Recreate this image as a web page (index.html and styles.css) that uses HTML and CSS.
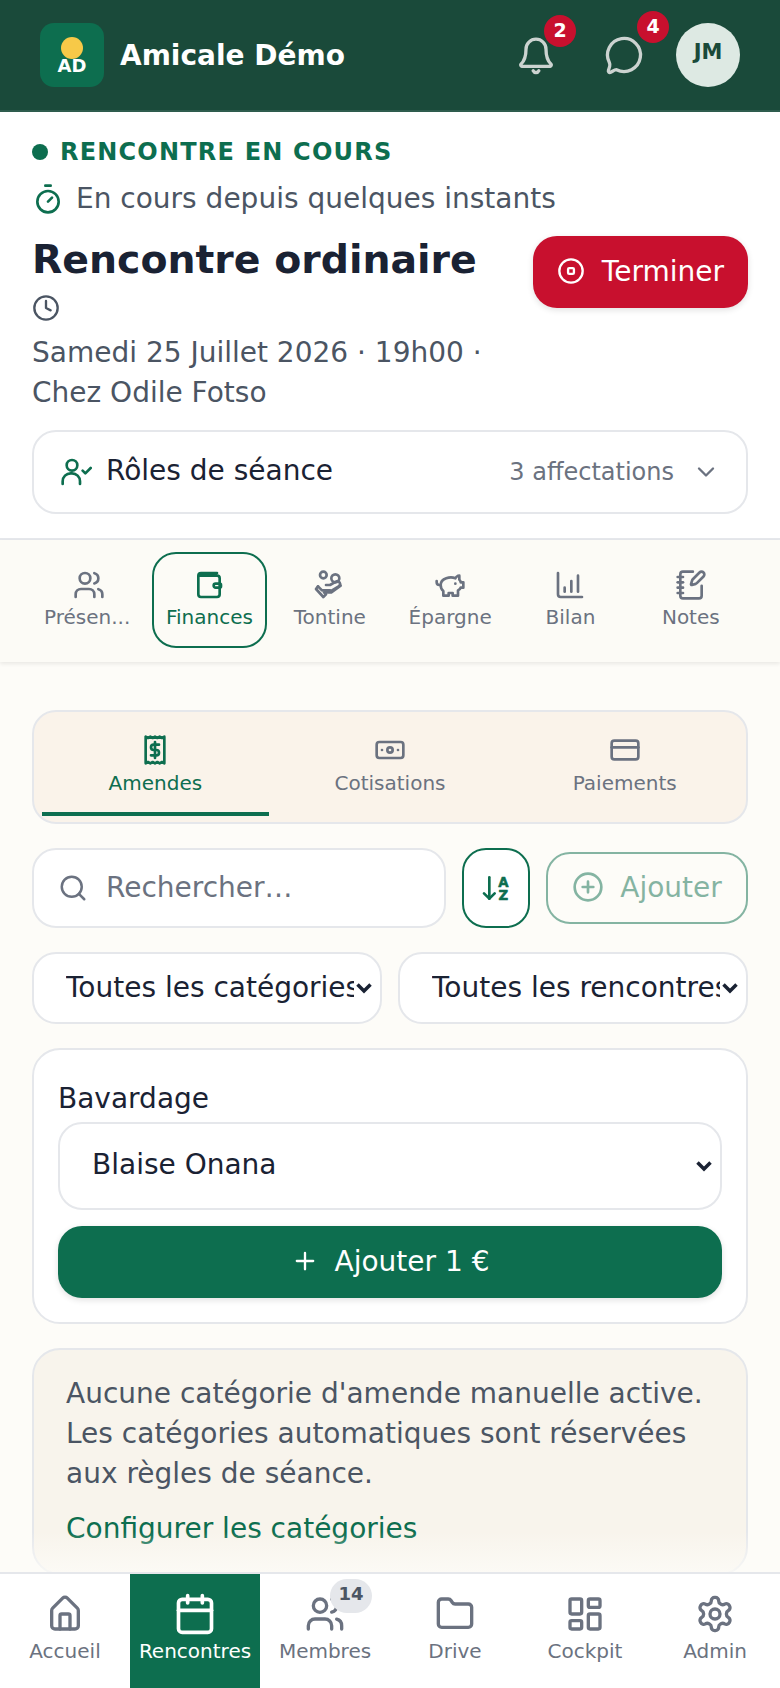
FILE: index.html
```html
<!DOCTYPE html>
<html lang="fr">
<head>
	<title>Rencontre ordinaire</title>
	<meta charset="utf-8">
	<link rel="stylesheet" href="styles.css">
</head>
<body>
	<header class="topbar">
		<div class="brand">
			<div class="logo"><span class="logo-sun"></span><span class="logo-text">AD</span></div>
			<span class="brand-name">Amicale Démo</span>
		</div>
		<div class="top-actions">
			<div class="top-icon top-bell">
				<svg viewBox="0 0 24 24"><path d="M6 8.500a6 6 0 0 1 12 0c0 5.500 1.500 7.500 3 9a.8.8 0 0 1-.5 1.300H3.500a.8.8 0 0 1-.5-1.300c1.500-1.500 3-3.500 3-9z"/><path d="M10.300 21.500a1.900 1.900 0 0 0 3.400 0"/></svg>
				<span class="badge">2</span>
			</div>
			<div class="top-icon top-chat">
				<svg viewBox="0 0 24 24"><path d="M7.900 20A9 9 0 1 0 4 16.100c.3.700.4 1.400.2 2.100L3.500 20.500a.8.8 0 0 0 1 1c1.200-.5 2.200-1.500 3.400-1.500z"/></svg>
				<span class="badge">4</span>
			</div>
			<div class="avatar">JM</div>
		</div>
	</header>

	<main class="page">
		<section class="meeting">
			<div class="live"><span class="live-dot"></span>RENCONTRE EN COURS</div>
			<div class="since">
				<svg class="since-icon" viewBox="0 0 24 24"><path d="M10 2h4"/><path d="M12 14l3-3"/><circle cx="12" cy="14" r="8"/></svg>
				<span>En cours depuis quelques instants</span>
			</div>
			<div class="meeting-head">
				<div class="meeting-info">
					<h1>Rencontre ordinaire</h1>
					<svg class="clock" viewBox="0 0 24 24"><circle cx="12" cy="12" r="10"/><path d="M12 6v6l4 2"/></svg>
					<p>Samedi 25 Juillet 2026 · 19h00 ·<br>Chez Odile Fotso</p>
				</div>
				<button class="end-btn">
					<svg viewBox="0 0 24 24"><circle cx="12" cy="12" r="10"/><rect x="9.500" y="9.500" width="5" height="5" rx="1"/></svg>
					Terminer
				</button>
			</div>
			<div class="roles">
				<svg class="roles-icon" viewBox="0 0 24 24"><path d="M2 21v-2a6 6 0 0 1 6-6h1a6 6 0 0 1 6 6v2"/><circle cx="9" cy="7" r="4"/><path d="M17 11l2 2 4-4"/></svg>
				<span class="roles-name">Rôles de séance</span>
				<span class="roles-count">3 affectations</span>
				<svg class="roles-chevron" viewBox="0 0 24 24"><path d="M6 9l6 6 6-6"/></svg>
			</div>
		</section>

		<nav class="sections">
			<div class="section-tab first">
				<svg viewBox="0 0 24 24"><path d="M16 21v-2a4 4 0 0 0-4-4H6a4 4 0 0 0-4 4v2"/><circle cx="9" cy="7" r="4"/><path d="M22 21v-2a4 4 0 0 0-3-3.870"/><path d="M16 3.130a4 4 0 0 1 0 7.750"/></svg>
				<span>Présen...</span>
			</div>
			<div class="section-tab active">
				<svg viewBox="0 0 24 24"><path d="M18 3H6a2 2 0 0 0-2 2v14a2 2 0 0 0 2 2h12a2 2 0 0 0 2-2V7a2 2 0 0 0-2-2H5"/><path d="M20 11h-3a1.500 1.500 0 0 0 0 3h3a1 1 0 0 0 1-1v-1a1 1 0 0 0-1-1z"/></svg>
				<span>Finances</span>
			</div>
			<div class="section-tab">
				<svg viewBox="0 0 24 24"><circle cx="7" cy="4.500" r="2.500"/><path d="M3 13l3 3h6"/><path d="M9 12h3l4.500-2.500a2 2 0 0 1 2 3.500L12 17"/><circle cx="16" cy="7" r="3"/><path d="M3 13l-1.500 2 5.500 6 2-2-1.500-1.500H13l7-5"/></svg>
				<span>Tontine</span>
			</div>
			<div class="section-tab">
				<svg viewBox="0 0 24 24"><path d="M19 5c-1.500 0-2.800 1.400-3 2-3.500-1.500-11-.3-11 5 0 1.800 0 3 2 4.500V20h4v-2h3v2h4v-4c1-.5 1.700-1 2-2h2v-4h-2c0-1-.5-1.500-1-2V5z"/><path d="M2 9v1c0 1.100.9 2 2 2h1"/><path d="M16 11h.01"/></svg>
				<span>Épargne</span>
			</div>
			<div class="section-tab">
				<svg viewBox="0 0 24 24"><path d="M3 3v16a2 2 0 0 0 2 2h16"/><path d="M8 17v-3"/><path d="M13 17V9"/><path d="M18 17V5"/></svg>
				<span>Bilan</span>
			</div>
			<div class="section-tab">
				<svg viewBox="0 0 24 24"><path d="M13.400 2H6a2 2 0 0 0-2 2v16a2 2 0 0 0 2 2h12a2 2 0 0 0 2-2v-7.400"/><path d="M2 6h4"/><path d="M2 10h4"/><path d="M2 14h4"/><path d="M2 18h4"/><path d="M21.380 5.630a1 1 0 1 0-3-3l-5.010 5.010a2 2 0 0 0-.51.850l-.84 2.870a.5.5 0 0 0 .62.620l2.870-.84a2 2 0 0 0 .850-.51z"/></svg>
				<span>Notes</span>
			</div>
		</nav>

		<div class="content">
			<div class="subtabs">
				<div class="subtab active">
					<svg viewBox="0 0 24 24"><path d="M5 2v20l1.750-1 1.750 1 1.750-1 1.750 1 1.750-1 1.750 1 1.750-1 1.750 1V2l-1.750 1-1.750-1-1.750 1-1.750-1-1.750 1-1.750-1-1.750 1z"/><path d="M15 8h-4a1.800 1.800 0 0 0 0 4h2a1.800 1.800 0 0 1 0 4H9"/><path d="M12 6v12"/></svg>
					<span>Amendes</span>
				</div>
				<div class="subtab">
					<svg viewBox="0 0 24 24"><rect x="2" y="6" width="20" height="12" rx="2"/><circle cx="12" cy="12" r="2"/><path d="M6 12h.01M18 12h.01"/></svg>
					<span>Cotisations</span>
				</div>
				<div class="subtab">
					<svg viewBox="0 0 24 24"><rect x="2" y="5" width="20" height="14" rx="2"/><path d="M2 10h20"/></svg>
					<span>Paiements</span>
				</div>
			</div>

			<div class="toolbar">
				<label class="search">
					<svg viewBox="0 0 24 24"><circle cx="11" cy="11" r="8"/><path d="M21 21l-4.300-4.300"/></svg>
					<input type="text" placeholder="Rechercher…">
				</label>
				<button class="sort-btn">
					<svg viewBox="0 0 24 24"><path d="M3 16l4 4 4-4"/><path d="M7 20V4"/><text x="17.500" y="11" text-anchor="middle">A</text><text x="17.500" y="21" text-anchor="middle">Z</text></svg>
				</button>
				<button class="add-btn">
					<svg viewBox="0 0 24 24"><circle cx="12" cy="12" r="10"/><path d="M8 12h8M12 8v8"/></svg>
					Ajouter
				</button>
			</div>

			<div class="filters">
				<select class="filter"><option>Toutes les catégories</option></select>
				<select class="filter"><option>Toutes les rencontres</option></select>
			</div>

			<div class="fine-card">
				<label class="fine-label">Bavardage</label>
				<select class="fine-select"><option>Blaise Onana</option></select>
				<button class="fine-btn">
					<svg viewBox="0 0 24 24"><path d="M5 12h14M12 5v14"/></svg>
					Ajouter 1 €
				</button>
			</div>

			<div class="note">
				<p>Aucune catégorie d'amende manuelle active. Les catégories automatiques sont réservées aux règles de séance.</p>
				<a href="#">Configurer les catégories</a>
			</div>
		</div>
		<div class="fade"></div>
	</main>

	<nav class="bottom">
		<div class="bottom-item">
			<svg viewBox="0 0 24 24"><path d="M15 21v-8a1 1 0 0 0-1-1h-4a1 1 0 0 0-1 1v8"/><path d="M4 10a2 2 0 0 1 .6-1.500l6-6a2 2 0 0 1 2.800 0l6 6A2 2 0 0 1 20 10v9a2 2 0 0 1-2 2H6a2 2 0 0 1-2-2z"/></svg>
			<span>Accueil</span>
		</div>
		<div class="bottom-item active">
			<svg viewBox="0 0 24 24"><path d="M8 2v4M16 2v4"/><rect x="3" y="4" width="18" height="18" rx="2"/><path d="M3 10h18"/></svg>
			<span>Rencontres</span>
		</div>
		<div class="bottom-item">
			<svg viewBox="0 0 24 24"><path d="M16 21v-2a4 4 0 0 0-4-4H6a4 4 0 0 0-4 4v2"/><circle cx="9" cy="7" r="4"/><path d="M22 21v-2a4 4 0 0 0-3-3.870"/><path d="M16 3.130a4 4 0 0 1 0 7.750"/></svg>
			<span>Membres</span>
			<em class="count">14</em>
		</div>
		<div class="bottom-item">
			<svg viewBox="0 0 24 24"><path d="M20 20a2 2 0 0 0 2-2V8a2 2 0 0 0-2-2h-7.900a2 2 0 0 1-1.700-.9l-.8-1.200A2 2 0 0 0 7.900 3H4a2 2 0 0 0-2 2v13a2 2 0 0 0 2 2z"/></svg>
			<span>Drive</span>
		</div>
		<div class="bottom-item">
			<svg viewBox="0 0 24 24"><rect x="3" y="3" width="7" height="9" rx="1"/><rect x="14" y="3" width="7" height="5" rx="1"/><rect x="14" y="12" width="7" height="9" rx="1"/><rect x="3" y="16" width="7" height="5" rx="1"/></svg>
			<span>Cockpit</span>
		</div>
		<div class="bottom-item">
			<svg viewBox="0 0 24 24"><path d="M12.220 2h-.44a2 2 0 0 0-2 2v.18a2 2 0 0 1-1 1.730l-.43.250a2 2 0 0 1-2 0l-.15-.08a2 2 0 0 0-2.730.730l-.22.380a2 2 0 0 0 .730 2.730l.15.1a2 2 0 0 1 1 1.720v.510a2 2 0 0 1-1 1.740l-.15.09a2 2 0 0 0-.730 2.730l.22.380a2 2 0 0 0 2.730.730l.15-.08a2 2 0 0 1 2 0l.43.250a2 2 0 0 1 1 1.730V20a2 2 0 0 0 2 2h.44a2 2 0 0 0 2-2v-.18a2 2 0 0 1 1-1.730l.43-.250a2 2 0 0 1 2 0l.15.08a2 2 0 0 0 2.730-.730l.22-.39a2 2 0 0 0-.730-2.730l-.15-.08a2 2 0 0 1-1-1.740v-.5a2 2 0 0 1 1-1.740l.15-.09a2 2 0 0 0 .730-2.730l-.22-.38a2 2 0 0 0-2.730-.730l-.15.08a2 2 0 0 1-2 0l-.43-.250a2 2 0 0 1-1-1.730V4a2 2 0 0 0-2-2z"/><circle cx="12" cy="12" r="3"/></svg>
			<span>Admin</span>
		</div>
	</nav>
</body>
</html>
```

FILE: styles.css
```css
* {
	box-sizing: border-box;
	padding: 0;
	margin: 0;
}
html, body {
	height: 100%;
}
body {
	display: flex;
	flex-direction: column;
	height: 1688px;
	overflow: hidden;
	background: #fdfcf8;
	color: #1a2233;
	font-family: "DejaVu Sans", sans-serif;
	font-size: 28px;
}
svg {
	fill: none;
	stroke: currentColor;
	stroke-width: 2;
	stroke-linecap: round;
	stroke-linejoin: round;
	flex: none;
}
button {
	font-family: inherit;
}

/* top bar */
.topbar {
	display: flex;
	align-items: center;
	justify-content: space-between;
	height: 112px;
	padding: 0 40px 0 40px;
	background: #1a4a3a;
	border-bottom: 2px solid #2e5c4d;
	flex: none;
}
.brand {
	display: flex;
	align-items: center;
	gap: 16px;
}
.logo {
	position: relative;
	width: 64px;
	height: 64px;
	border-radius: 14px;
	background: #0d6e4f;
}
.logo-sun {
	position: absolute;
	top: 14px;
	left: 21px;
	width: 22px;
	height: 22px;
	border-radius: 50%;
	background: #f7c948;
}
.logo-text {
	position: absolute;
	left: 0;
	right: 0;
	top: 31px;
	text-align: center;
	color: #fff;
	font-size: 18px;
	font-weight: 700;
	line-height: 24px;
}
.brand-name {
	color: #fff;
	font-size: 28px;
	font-weight: 700;
}
.top-actions {
	display: flex;
	align-items: center;
}
.top-icon {
	position: relative;
	width: 40px;
	height: 40px;
	color: #ccd3d0;
}
.top-icon svg {
	width: 40px;
	height: 40px;
}
.top-bell {
	margin-right: 48px;
}
.top-chat {
	margin-right: 32px;
}
.top-chat svg {
	width: 44px;
	height: 44px;
	margin: -2px;
	stroke-width: 1.800;
}
.badge {
	position: absolute;
	width: 32px;
	height: 32px;
	border-radius: 50%;
	background: #c8102e;
	color: #fff;
	font-size: 19px;
	font-weight: 700;
	line-height: 30px;
	text-align: center;
}
.top-bell .badge {
	top: -20px;
	left: 28px;
}
.top-chat .badge {
	top: -24px;
	left: 33px;
}
.avatar {
	width: 64px;
	height: 64px;
	border-radius: 50%;
	background: #dde9e3;
	color: #1a4a3a;
	font-size: 21px;
	font-weight: 700;
	line-height: 58px;
	text-align: center;
}

/* main column */
.page {
	position: relative;
	flex: 1;
	min-height: 0;
	overflow: hidden;
}
.fade {
	position: absolute;
	left: 0;
	right: 0;
	bottom: 0;
	height: 40px;
	background: linear-gradient(rgba(253, 252, 248, 0), rgba(253, 252, 248, .75));
}

/* meeting */
.meeting {
	padding: 24px 32px 24px;
	background: #fff;
	border-bottom: 2px solid #e5e7eb;
}
.live {
	display: flex;
	align-items: center;
	gap: 12px;
	color: #0d6e4f;
	font-size: 24px;
	font-weight: 700;
	letter-spacing: 1.200px;
	line-height: 32px;
}
.live-dot {
	width: 16px;
	height: 16px;
	border-radius: 50%;
	background: #0d6e4f;
}
.since {
	display: flex;
	align-items: center;
	gap: 12px;
	margin-top: 10px;
	color: #4b5563;
	line-height: 42px;
}
.since-icon {
	width: 32px;
	height: 32px;
	color: #0d6e4f;
}
.meeting-head {
	display: flex;
	justify-content: space-between;
	align-items: flex-start;
	margin-top: 16px;
}
.meeting-info h1 {
	color: #1a2233;
	font-size: 39.400px;
	font-weight: 700;
	line-height: 46px;
	padding-bottom: 2px;
}
.clock {
	display: block;
	width: 28px;
	height: 28px;
	margin-top: 10px;
	color: #4b5563;
}
.meeting-info p {
	margin-top: 11px;
	color: #4b5563;
	line-height: 40px;
}
.end-btn {
	display: flex;
	align-items: center;
	gap: 17px;
	height: 72px;
	padding: 0 24px 2px;
	border: 0;
	border-radius: 24px;
	background: #c8102e;
	color: #fff;
	font-size: 28px;
	box-shadow: 0 2px 6px rgba(0, 0, 0, .12);
}
.end-btn svg {
	width: 28px;
	height: 28px;
}
.roles {
	display: flex;
	align-items: center;
	height: 84px;
	margin-top: 17px;
	padding: 0 26px 0 26px;
	background: #fff;
	border: 2px solid #e5e7eb;
	border-radius: 24px;
}
.roles-icon {
	width: 32px;
	height: 32px;
	color: #0d6e4f;
}
.roles-name {
	flex: 1;
	margin-left: 14px;
	padding-bottom: 3px;
	font-size: 28px;
	color: #1a2233;
}
.roles-count {
	color: #6b7280;
	font-size: 24px;
}
.roles-chevron {
	width: 28px;
	height: 28px;
	margin-left: 18px;
	color: #6b7280;
}

/* section tabs */
.sections {
	display: flex;
	align-items: center;
	gap: 6px;
	height: 122px;
	padding: 0 32px 2px;
	background: #fcfbf6;
	box-shadow: 0 2px 4px rgba(0, 0, 0, .08);
}
.section-tab {
	display: flex;
	flex-direction: column;
	align-items: center;
	justify-content: center;
	gap: 4px;
	flex: 1;
	min-width: 0;
	height: 96px;
	padding-bottom: 3px;
	border: 2px solid transparent;
	border-radius: 24px;
	color: #6b7280;
	font-size: 20px;
}
.section-tab svg {
	width: 32px;
	height: 32px;
}
.section-tab.first span {
	margin-right: 4px;
}
.section-tab.active {
	color: #0d6e4f;
	border-color: #0d6e4f;
}

/* content */
.content {
	display: flex;
	flex-direction: column;
	gap: 24px;
	padding: 48px 32px 0;
}
.subtabs {
	display: flex;
	gap: 8px;
	height: 114px;
	padding: 6px 8px;
	background: #faf3ea;
	border: 2px solid #e5e7eb;
	border-radius: 24px;
}
.subtab {
	display: flex;
	flex-direction: column;
	align-items: center;
	gap: 5px;
	flex: 1;
	padding-top: 16px;
	color: #6b7280;
	font-size: 20px;
	line-height: 24px;
	border-bottom: 4px solid transparent;
}
.subtab svg {
	width: 32px;
	height: 32px;
}
.subtab.active {
	color: #0d6e4f;
	border-bottom-color: #0d6e4f;
}
.toolbar {
	display: flex;
	align-items: center;
	gap: 16px;
}
.search {
	display: flex;
	align-items: center;
	gap: 18px;
	flex: 1;
	height: 80px;
	padding: 0 24px;
	background: #fff;
	border: 2px solid #e5e7eb;
	border-radius: 24px;
}
.search svg {
	width: 30px;
	height: 30px;
	color: #6b7280;
}
.search input {
	width: 100%;
	min-width: 0;
	margin-bottom: 2px;
	border: 0;
	outline: 0;
	background: transparent;
	font-family: inherit;
	font-size: 28px;
}
.search input::placeholder {
	color: #6b7280;
}
.sort-btn {
	display: flex;
	align-items: center;
	justify-content: center;
	width: 68px;
	height: 80px;
	background: #fff;
	border: 2px solid #0d6e4f;
	border-radius: 24px;
	color: #0d6e4f;
}
.sort-btn svg {
	width: 32px;
	height: 32px;
}
.sort-btn text {
	fill: currentColor;
	stroke: currentColor;
	stroke-width: .4;
	font-size: 10px;
	font-weight: 700;
}
.add-btn {
	display: flex;
	align-items: center;
	justify-content: center;
	gap: 16px;
	width: 202px;
	height: 72px;
	padding-bottom: 2px;
	background: transparent;
	border: 2px solid #0d6e4f;
	border-radius: 24px;
	color: #0d6e4f;
	font-size: 28px;
	opacity: .5;
}
.add-btn svg {
	width: 32px;
	height: 32px;
}
.filters {
	display: grid;
	grid-template-columns: 1fr 1fr;
	gap: 16px;
}
select {
	width: 100%;
	appearance: none;
	background: #fff url("data:image/svg+xml,%3Csvg xmlns='http://www.w3.org/2000/svg' width='18' height='12' viewBox='0 0 18 12'%3E%3Cpath d='M2.500 2.500L9 9l6.500-6.500' fill='none' stroke='%231a2233' stroke-width='3.500'/%3E%3C/svg%3E") no-repeat right 7px center;
	border: 2px solid #e5e7eb;
	border-radius: 24px;
	color: #1a2233;
	font-family: inherit;
	font-size: 28px;
}
.filter {
	height: 72px;
	padding: 0 26px 2px 32px;
}
.fine-card {
	display: flex;
	flex-direction: column;
	padding: 25px 24px 24px;
	background: #fff;
	border: 2px solid #e5e7eb;
	border-radius: 28px;
}
.fine-label {
	color: #1a2233;
	font-size: 28px;
	line-height: 47px;
}
.fine-select {
	height: 88px;
	padding: 0 32px 4px;
}
.fine-btn {
	display: flex;
	align-items: center;
	justify-content: center;
	gap: 16px;
	height: 72px;
	margin-top: 16px;
	padding-bottom: 2px;
	border: 0;
	border-radius: 24px;
	background: #0d6e4f;
	color: #fff;
	font-size: 28px;
	box-shadow: 0 2px 6px rgba(0, 0, 0, .12);
}
.fine-btn svg {
	width: 28px;
	height: 28px;
}
.note {
	padding: 24px 32px 24px;
	background: #f8f4ec;
	border: 2px solid #e5e7eb;
	border-radius: 28px;
	color: #4b5563;
	line-height: 40px;
}
.note a {
	display: block;
	margin-top: 15px;
	color: #0d6e4f;
	text-decoration: none;
}

/* bottom nav */
.bottom {
	display: grid;
	grid-template-columns: repeat(6, 1fr);
	height: 116px;
	background: #fff;
	border-top: 2px solid #e5e7eb;
	flex: none;
}
.bottom-item {
	position: relative;
	display: flex;
	flex-direction: column;
	align-items: center;
	padding-top: 20px;
	gap: 5px;
	color: #6b7280;
	font-size: 20px;
}
.bottom-item svg {
	width: 40px;
	height: 40px;
}
.bottom-item.active {
	background: #0d6e4f;
	color: #fff;
}
.bottom-item.active svg {
	width: 44px;
	height: 44px;
	margin: -2px;
}
.count {
	position: absolute;
	top: 5px;
	left: 70px;
	width: 42px;
	height: 34px;
	border-radius: 17px;
	background: #e5e7eb;
	color: #4b5563;
	font-size: 18px;
	font-style: normal;
	font-weight: 700;
	line-height: 30px;
	text-align: center;
}
```
